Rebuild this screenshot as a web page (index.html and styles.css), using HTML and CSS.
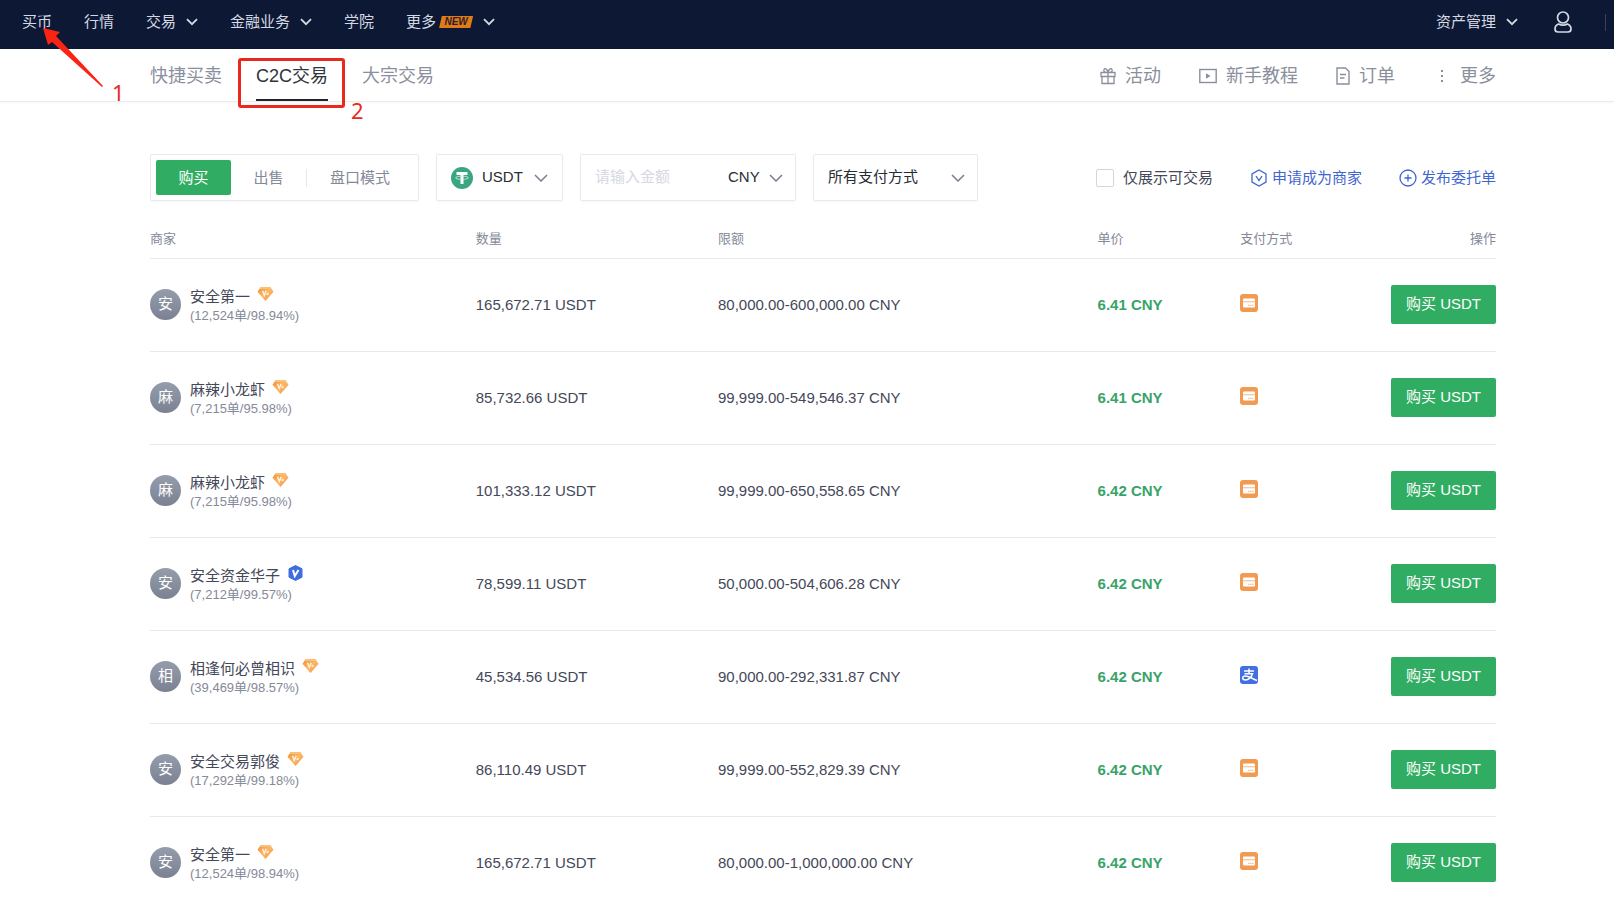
FILE: index.html
```html
<!DOCTYPE html>
<html lang="zh-CN">
<head>
<meta charset="utf-8">
<title>C2C交易</title>
<link rel="stylesheet" href="styles.css">
</head>
<body>
<svg class="sprite" aria-hidden="true">
  <defs>
    <linearGradient id="gold" x1="0" y1="0" x2="1" y2="1"><stop offset="0" stop-color="#f28a2e"/><stop offset=".5" stop-color="#fbb868"/><stop offset="1" stop-color="#f58f3c"/></linearGradient>
    <symbol id="chevron" viewBox="0 0 12 8"><path d="M1 1.2l5 5 5-5" fill="none" stroke="currentColor" stroke-width="1.8"/></symbol>
    <symbol id="chevron-thin" viewBox="0 0 14 8"><path d="M1 1l6 6 6-6" fill="none" stroke="currentColor" stroke-width="1.5"/></symbol>
    <symbol id="gem" viewBox="0 0 18 16"><path d="M4 .5h10l3.500 5L9 15.500.5 5.500z" fill="url(#gold)"/><path d="M4 .5h10l1.500 2.200h-13z" fill="#fbc078"/><path d="M5.800 4.500l1.900 5 2-5" fill="none" stroke="#fff3e2" stroke-width="1.500"/><circle cx="11.300" cy="8" r="1.300" fill="#ffe9d0"/></symbol>
    <symbol id="shield" viewBox="0 0 16 16"><path d="M8 .5l6.500 3.300v8.400L8 15.500 1.500 12.200V3.800z" fill="#3f6ee0" stroke="#3f6ee0" stroke-linejoin="round"/><path d="M5.500 5l1.800 6L11 5" fill="none" stroke="#fff" stroke-width="2"/></symbol>
    <symbol id="card" viewBox="0 0 18 18"><rect width="18" height="18" rx="3" fill="#f19a52"/><rect x="3" y="4.500" width="12" height="9" rx="1" fill="#fff"/><path d="M3 7.700h12" stroke="#f7c49b" stroke-width="1.200"/><path d="M8 11.300h5.500" stroke="#f5b47f" stroke-dasharray="1.500 .5"/></symbol>
    <symbol id="alipay" viewBox="0 0 18 18"><rect width="18" height="18" rx="3" fill="#436fe3"/><path d="M4 5h10M9 2.500v5M4.500 7.700h8C11.500 11 8.500 14 5.500 14c-4 0-3.500-4 0-4 3.500 0 6 2.500 11.500 4.500" fill="none" stroke="#fff" stroke-width="1.500"/></symbol>
  </defs>
</svg>

<header class="topbar">
  <nav class="topnav">
    <a href="#">买币</a>
    <a href="#">行情</a>
    <a href="#">交易<svg class="chev"><use href="#chevron"/></svg></a>
    <a href="#">金融业务<svg class="chev"><use href="#chevron"/></svg></a>
    <a href="#">学院</a>
    <a href="#">更多<span class="new"><span>NEW</span></span><svg class="chev"><use href="#chevron"/></svg></a>
  </nav>
  <div class="account">
    <a href="#">资产管理<svg class="chev"><use href="#chevron"/></svg></a>
    <a href="#" aria-label="账户"><svg class="user" viewBox="0 0 18 22"><g fill="none" stroke="currentColor" stroke-width="1.700"><circle cx="9" cy="6.500" r="5.500"/><path d="M4.500 13C2 14 1 15.500 1 18c0 2 1 3 3 3h10c2 0 3-1 3-3 0-2.500-1-4-3.500-5-3 1.500-6 1.500-9 0z"/></g></svg></a>
    <span class="divider"></span>
  </div>
</header>

<div class="subbar">
  <nav class="tabs">
    <a href="#">快捷买卖</a>
    <a href="#" class="active">C2C交易</a>
    <a href="#">大宗交易</a>
  </nav>
  <nav class="tools">
    <a href="#"><svg width="16" height="18" viewBox="0 0 16 18"><path d="M1 5.500h14v4H1zM2 9.500v7h12v-7M8 5.500v11M8 5.500C5 5.500 3 4.500 4 2.500s3.500 0 4 3c.5-3 3-5 4-3s-1 3-4 3" fill="none" stroke="currentColor" stroke-width="1.300"/></svg>活动</a>
    <a href="#"><svg width="18" height="16" viewBox="0 0 18 16"><rect x=".8" y="1.500" width="16.400" height="13" fill="none" stroke="currentColor" stroke-width="1.400"/><path d="M7 5.300v5.400L11.500 8z" fill="currentColor"/></svg>新手教程</a>
    <a href="#"><svg width="14" height="18" viewBox="0 0 14 18"><path d="M1 1h8.500L13 4.500V17H1zM4 7.500h6M4 11h4.500" fill="none" stroke="currentColor" stroke-width="1.400"/></svg>订单</a>
    <a href="#"><svg width="18" height="14" viewBox="0 0 18 14"><path d="M8 1h2v2H8zM8 6h2v2H8zM8 11h2v2H8z" fill="currentColor"/></svg>更多</a>
  </nav>
</div>

<main class="page">
  <form class="filters">
    <div class="box modes">
      <button type="button" class="on">购买</button>
      <button type="button">出售</button>
      <button type="button" class="book">盘口模式</button>
    </div>
    <label class="box coin">
      <svg class="tether" viewBox="0 0 22 22"><circle cx="11" cy="11" r="11" fill="#3aa582"/><path d="M5.500 5h11v3h-4v9h-3V8h-4z" fill="#fff"/><ellipse cx="11" cy="10.800" rx="6.500" ry="1.600" fill="none" stroke="#d7efe6" stroke-width=".8"/></svg>
      <select aria-label="币种"><option>USDT</option></select>
      <svg class="arrow"><use href="#chevron-thin"/></svg>
    </label>
    <div class="box amount">
      <input type="text" placeholder="请输入金额" aria-label="金额">
      <label class="currency"><select aria-label="法币"><option>CNY</option></select><svg class="arrow"><use href="#chevron-thin"/></svg></label>
    </div>
    <label class="box payment">
      <select aria-label="支付方式"><option>所有支付方式</option></select>
      <svg class="arrow"><use href="#chevron-thin"/></svg>
    </label>
    <div class="actions">
      <label class="check"><input type="checkbox">仅展示可交易</label>
      <a href="#"><svg width="18" height="18" viewBox="0 0 18 18"><path d="M9 1l7 4v8l-7 4-7-4V5zM6 7l3 4.500L12 7" fill="none" stroke="currentColor" stroke-width="1.300"/></svg>申请成为商家</a>
      <a href="#"><svg width="18" height="18" viewBox="0 0 18 18"><path d="M9 5.500v7M5.500 9h7" stroke="currentColor" stroke-width="1.300"/><circle cx="9" cy="9" r="8" fill="none" stroke="currentColor" stroke-width="1.300"/></svg>发布委托单</a>
    </div>
  </form>

  <table class="offers">
    <colgroup><col class="c-merchant"><col class="c-qty"><col class="c-limit"><col class="c-price"><col class="c-pay"><col></colgroup>
    <thead>
      <tr><th>商家</th><th>数量</th><th>限额</th><th>单价</th><th>支付方式</th><th class="op">操作</th></tr>
    </thead>
    <tbody>
      <tr>
        <td><div class="merchant"><span class="avatar">安</span><div><div class="name">安全第一<svg class="gem"><use href="#gem"/></svg></div><div class="stats">(12,524单/98.94%)</div></div></div></td>
        <td>165,672.71 USDT</td><td>80,000.00-600,000.00 CNY</td><td class="price">6.41 CNY</td>
        <td><svg class="pay"><use href="#card"/></svg></td><td class="op"><button type="button" class="buy">购买 USDT</button></td>
      </tr>
      <tr>
        <td><div class="merchant"><span class="avatar">麻</span><div><div class="name">麻辣小龙虾<svg class="gem"><use href="#gem"/></svg></div><div class="stats">(7,215单/95.98%)</div></div></div></td>
        <td>85,732.66 USDT</td><td>99,999.00-549,546.37 CNY</td><td class="price">6.41 CNY</td>
        <td><svg class="pay"><use href="#card"/></svg></td><td class="op"><button type="button" class="buy">购买 USDT</button></td>
      </tr>
      <tr>
        <td><div class="merchant"><span class="avatar">麻</span><div><div class="name">麻辣小龙虾<svg class="gem"><use href="#gem"/></svg></div><div class="stats">(7,215单/95.98%)</div></div></div></td>
        <td>101,333.12 USDT</td><td>99,999.00-650,558.65 CNY</td><td class="price">6.42 CNY</td>
        <td><svg class="pay"><use href="#card"/></svg></td><td class="op"><button type="button" class="buy">购买 USDT</button></td>
      </tr>
      <tr>
        <td><div class="merchant"><span class="avatar">安</span><div><div class="name">安全资金华子<svg class="gem"><use href="#shield"/></svg></div><div class="stats">(7,212单/99.57%)</div></div></div></td>
        <td>78,599.11 USDT</td><td>50,000.00-504,606.28 CNY</td><td class="price">6.42 CNY</td>
        <td><svg class="pay"><use href="#card"/></svg></td><td class="op"><button type="button" class="buy">购买 USDT</button></td>
      </tr>
      <tr>
        <td><div class="merchant"><span class="avatar">相</span><div><div class="name">相逢何必曾相识<svg class="gem"><use href="#gem"/></svg></div><div class="stats">(39,469单/98.57%)</div></div></div></td>
        <td>45,534.56 USDT</td><td>90,000.00-292,331.87 CNY</td><td class="price">6.42 CNY</td>
        <td><svg class="pay"><use href="#alipay"/></svg></td><td class="op"><button type="button" class="buy">购买 USDT</button></td>
      </tr>
      <tr>
        <td><div class="merchant"><span class="avatar">安</span><div><div class="name">安全交易郭俊<svg class="gem"><use href="#gem"/></svg></div><div class="stats">(17,292单/99.18%)</div></div></div></td>
        <td>86,110.49 USDT</td><td>99,999.00-552,829.39 CNY</td><td class="price">6.42 CNY</td>
        <td><svg class="pay"><use href="#card"/></svg></td><td class="op"><button type="button" class="buy">购买 USDT</button></td>
      </tr>
      <tr>
        <td><div class="merchant"><span class="avatar">安</span><div><div class="name">安全第一<svg class="gem"><use href="#gem"/></svg></div><div class="stats">(12,524单/98.94%)</div></div></div></td>
        <td>165,672.71 USDT</td><td>80,000.00-1,000,000.00 CNY</td><td class="price">6.42 CNY</td>
        <td><svg class="pay"><use href="#card"/></svg></td><td class="op"><button type="button" class="buy">购买 USDT</button></td>
      </tr>
    </tbody>
  </table>
</main>

<svg class="pointer" viewBox="0 0 60 60" aria-hidden="true"><path d="M0 0l17 4-4 4 47 50-1 1L9 14l-4 3z" fill="#fb2414"/></svg>
<span class="frame"></span>
<span class="step one">1</span>
<span class="step two">2</span>
</body>
</html>
```

FILE: styles.css
```css
* { box-sizing: border-box; }
html { overflow: hidden; }
body {
  margin: 0;
  background: #fff;
  color: #444859;
  font: 15px/20px "Liberation Sans", "Noto Sans CJK SC", sans-serif;
}
a { color: inherit; text-decoration: none; }
button, input, select { font: inherit; color: inherit; }
svg { display: block; flex: none; }
.sprite { position: absolute; width: 0; height: 0; }

.topbar {
  display: flex;
  justify-content: space-between;
  height: 49px;
  padding: 0 8px 5px 22px;
  background: #0d1835;
  color: #d5d9e2;
}
.topnav, .account { display: flex; align-items: center; }
.topnav { gap: 32px; }
.topnav a, .account a { display: flex; align-items: center; }
.chev { width: 12px; height: 8px; margin-left: 10px; }
.new {
  width: 34px;
  height: 12px;
  margin-left: 3px;
  background: #e27a17;
  color: #2a2030;
  font-size: 10px;
  line-height: 12px;
  font-weight: 700;
  font-style: italic;
  text-align: center;
  clip-path: polygon(8% 0, 100% 0, 92% 100%, 0 100%);
}
.account { gap: 36px; }
.user { width: 18px; height: 22px; }
.divider { width: 1px; height: 17px; margin-left: -3px; background: #39425a; }

.subbar {
  display: flex;
  justify-content: space-between;
  height: 53px;
  padding: 0 118px 0 150px;
  border-bottom: 1px solid #ececee;
  box-shadow: 0 1px 3px #00000008;
  color: #8b8f9d;
  font-size: 18px;
}
.tabs { display: flex; gap: 34px; }
.tabs a { padding-top: 17px; border-bottom: 2px solid transparent; }
.tabs .active { color: #2f333c; border-color: #22262c; }
.tools { display: flex; gap: 38px; padding-top: 17px; }
.tools a { display: flex; align-items: center; gap: 9px; height: 20px; }

.page { padding: 52px 118px 0 150px; }
.filters { display: flex; gap: 17px; }
.box {
  display: flex;
  align-items: center;
  height: 47px;
  border: 1px solid #e9eaec;
  border-radius: 2px;
  box-shadow: 0 1px 2px #0000000a;
  background: #fff;
}
.box select, .box input {
  min-width: 0;
  border: 0;
  padding: 0 0 2px;
  outline: 0;
  background: none;
  appearance: none;
  color: #282c34;
}
.arrow { width: 14px; height: 8px; color: #7a7f8e; }
.modes { width: 269px; padding: 5px; }
.modes button {
  height: 35px;
  padding: 0;
  border: 0;
  border-radius: 2px;
  background: none;
  color: #858998;
  flex: 0 0 75px;
}
.modes .on { background: #30ad63; color: #fff; }
.modes .book {
  flex: 1;
  height: 18px;
  line-height: 18px;
  border-left: 1px solid #e6e7ea;
  border-radius: 0;
}
.coin { width: 127px; padding: 0 14px; gap: 9px; }
.coin select { flex: 1; }
.tether { width: 22px; height: 22px; }
.amount { width: 216px; padding: 0 12px 0 14px; }
.amount input { flex: 1; }
.amount input::placeholder { color: #d6d8e2; opacity: 1; }
.currency { display: flex; align-items: center; gap: 9px; }
.payment { width: 165px; padding: 0 12px 0 14px; }
.payment select { flex: 1; }
.actions { display: flex; align-items: center; gap: 37px; margin-left: auto; color: #3f66cf; }
.actions a { display: flex; align-items: center; gap: 4px; }
.check { display: flex; align-items: center; gap: 9px; color: #444859; }
.check input {
  appearance: none;
  width: 18px;
  height: 18px;
  margin: 0;
  border: 1px solid #d4d6da;
  border-radius: 2px;
}

.offers { width: 100%; margin-top: 20px; border-collapse: collapse; table-layout: fixed; }
.c-merchant { width: 24.2%; }
.c-qty { width: 18%; }
.c-limit { width: 28.2%; }
.c-price { width: 10.6%; }
.c-pay { width: 9%; }
.offers th {
  height: 37px;
  padding: 0;
  color: #858998;
  font-size: 13px;
  font-weight: 400;
  text-align: left;
}
.offers tr { border-bottom: 1px solid #e8e9eb; }
.offers td { height: 93px; padding: 0; white-space: nowrap; }
.offers .op { text-align: right; }
.offers .price { color: #38a368; font-weight: 700; }
.merchant { display: flex; align-items: center; gap: 9px; }
.avatar {
  width: 31px;
  height: 31px;
  border-radius: 50%;
  background: linear-gradient(#959dac, #7b8192);
  color: #fff;
  line-height: 30px;
  text-align: center;
}
.name { display: flex; align-items: center; gap: 7px; }
.gem { width: 17px; height: 16px; margin-bottom: 6px; }
.stats { color: #858998; font-size: 13px; line-height: 16px; }
.pay { width: 18px; height: 18px; margin-bottom: 4px; }
.buy {
  width: 105px;
  height: 39px;
  padding: 0 0 2px;
  border: 0;
  border-radius: 2px;
  background: #30ad63;
  color: #fff;
}

/* walkthrough markers laid over the page */
.pointer, .frame, .step { position: absolute; }
.pointer { left: 43px; top: 28px; width: 60px; height: 60px; }
.frame {
  left: 238px;
  top: 58px;
  width: 107px;
  height: 50px;
  border: 3px solid #e9291d;
  border-radius: 3px;
}
.step { color: #e9291d; font: 22px/24px "Noto Sans", sans-serif; }
.one { left: 112px; top: 80px; }
.two { left: 351px; top: 98px; }
```
